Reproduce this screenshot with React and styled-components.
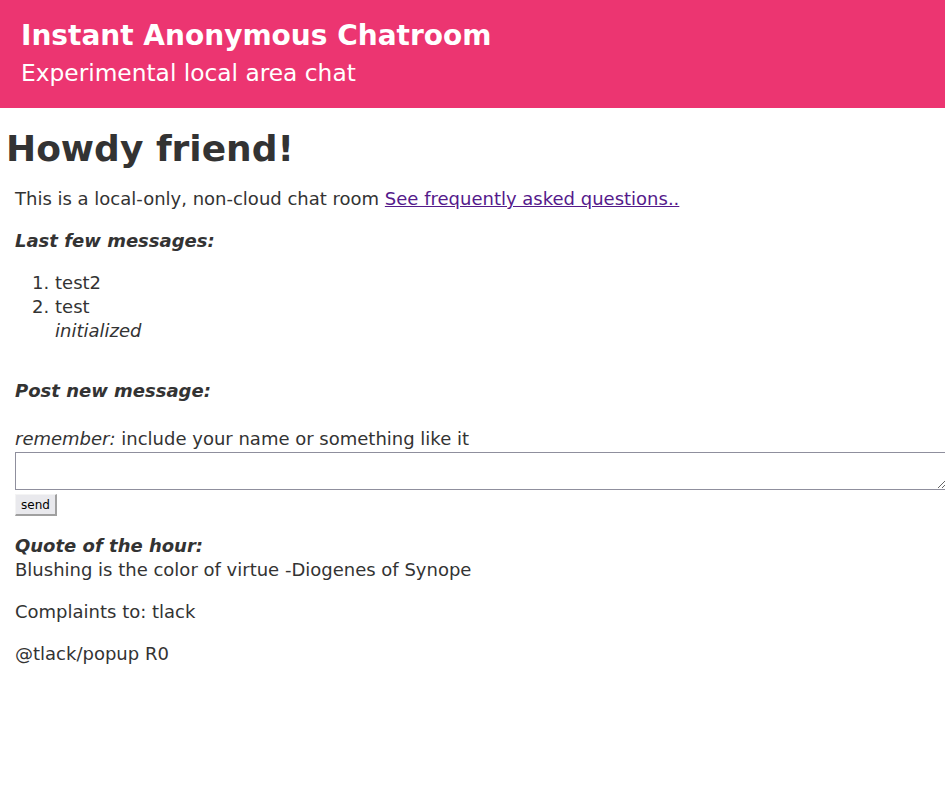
import React from 'react';
import styled, { createGlobalStyle } from 'styled-components';

const GlobalStyle = createGlobalStyle`
  body {
    margin: 0;
    background: #fff;
    color: #333;
    font-family: 'DejaVu Sans', Verdana, sans-serif;
    font-size: 18px;
    line-height: 24px;
  }
`;

const Header = styled.header`
  background-color: #ec3571;
  color: #fff;
  height: 108px;
  box-sizing: border-box;
  padding: 18px 21px 0;

  h2 {
    margin: 0;
    font-size: 28px;
    line-height: 36px;
    font-weight: bold;
  }

  h3 {
    margin: 1px 0 0;
    font-size: 23.3px;
    line-height: 36px;
    font-weight: normal;
  }
`;

const Main = styled.main`
  padding: 0 0 0 15px;

  h1 {
    margin: 21px 0 18px -9px;
    font-size: 36px;
    line-height: 40px;
  }

  p {
    margin: 18px 0;
  }

  a {
    color: #551a8b;
  }
`;

const Label = styled.p`
  font-weight: bold;
  font-style: italic;
  && {
    margin-bottom: ${p => (p.$tight ? '0' : '18px')};
  }
`;

const MessageList = styled.ol`
  margin: 18px 0 36px;
  padding-left: 40px;

  em {
    display: block;
  }
`;

const Form = styled.form`
  margin: 0;

  em {
    font-style: italic;
  }
`;

const Hint = styled.div`
  margin-top: 24px;
`;

const Box = styled.textarea`
  display: block;
  width: 100%;
  height: 36px;
  box-sizing: content-box;
  margin: 1px 0 0;
  padding: 0;
  border: 1px solid #8f8f9d;
  border-radius: 0;
  font-family: inherit;
`;

const SendButton = styled.button`
  margin-top: 4px;
  font-family: 'DejaVu Sans', sans-serif;
  font-size: 12px;
  line-height: 16px;
  color: #000;
  background: #e9e9ed;
  border-style: solid;
  border-color: #f4f4f4 #a0a0a0 #a0a0a0 #f4f4f4;
  border-width: 1px 2px 2px 1px;
  padding: 2px 5px 1px;
`;

export default function App() {
  return (
    <>
      <GlobalStyle />
      <Header>
        <h2>Instant Anonymous Chatroom</h2>
        <h3>Experimental local area chat</h3>
      </Header>
      <Main>
        <h1>Howdy friend!</h1>
        <p>
          This is a local-only, non-cloud chat room{' '}
          <a href="#faq">See frequently asked questions..</a>
        </p>
        <Label>Last few messages:</Label>
        <MessageList>
          <li>test2</li>
          <li>
            test
            <em>initialized</em>
          </li>
        </MessageList>
        <Form onSubmit={e => e.preventDefault()}>
          <Label $tight>Post new message:</Label>
          <Hint>
            <em>remember:</em> include your name or something like it
          </Hint>
          <Box />
          <SendButton type="submit">send</SendButton>
        </Form>
        <Label $tight>Quote of the hour:</Label>
        <p style={{ marginTop: 0 }}>Blushing is the color of virtue -Diogenes of Synope</p>
        <p>Complaints to: tlack</p>
        <p>@tlack/popup R0</p>
      </Main>
    </>
  );
}
